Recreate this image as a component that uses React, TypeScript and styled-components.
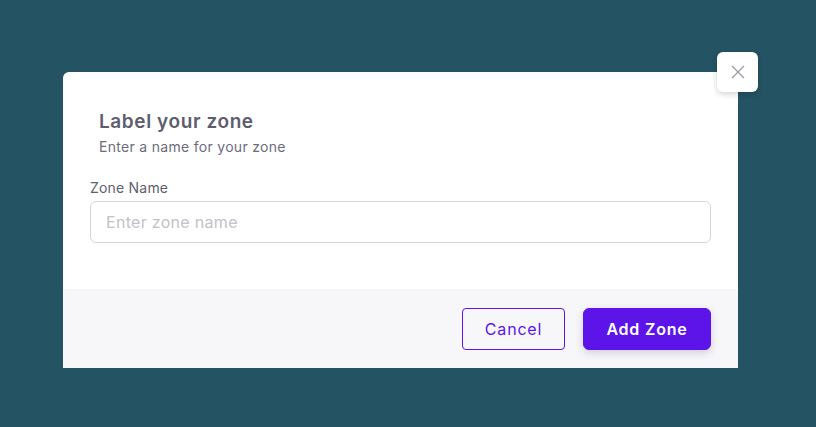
import React, { useState } from 'react';
import styled, { createGlobalStyle } from 'styled-components';

const GlobalStyle = createGlobalStyle`
  html, body {
    margin: 0;
    padding: 0;
    background: #245363;
    font-family: Inter, "Noto Sans", sans-serif;
  }
  * { box-sizing: border-box; }
`;

const Backdrop = styled.div`
  width: 816px;
  height: 427px;
  padding: 72px 0 0 63px;
  background: #245363;
`;

const Modal = styled.div`
  position: relative;
  width: 675px;
  background: #fff;
  border-radius: 6px 0 0 0;
`;

const CloseButton = styled.button`
  position: absolute;
  top: -20px;
  right: -20px;
  width: 41px;
  height: 40px;
  border: none;
  border-radius: 6px;
  background: #fff;
  box-shadow: 0 2px 6px rgba(0, 0, 0, 0.18);
  display: flex;
  align-items: center;
  justify-content: center;
  padding: 0;
  cursor: pointer;
`;

const Body = styled.div`
  padding: 38px 27px 46px 27px;
`;

const Header = styled.div`
  padding: 0 9px;
  margin-bottom: 23px;
`;

const Title = styled.h2`
  margin: 0;
  font-size: 19px;
  font-weight: 600;
  letter-spacing: 0.6px;
  color: #5d5d6c;
  line-height: 24px;
`;

const Subtitle = styled.p`
  margin: 4px 0 0;
  font-size: 14px;
  letter-spacing: 0.3px;
  color: #6c6c7c;
  line-height: 18px;
`;

const Label = styled.label`
  display: block;
  font-size: 14px;
  letter-spacing: 0.2px;
  color: #5e5e6e;
  line-height: 18px;
  margin-bottom: 4px;
`;

const Input = styled.input`
  width: 100%;
  height: 42px;
  border: 1px solid #d6d6d9;
  border-radius: 6px;
  padding: 0 15px;
  font-family: Inter, "Noto Sans", sans-serif;
  font-size: 16px;
  letter-spacing: 0.3px;
  color: #333;
  outline: none;
  &::placeholder { color: #c2c2c8; }
`;

const Footer = styled.div`
  background: #f7f7fa;
  height: 79px;
  padding: 0 27px;
  display: flex;
  align-items: center;
  justify-content: flex-end;
  gap: 18px;
`;

const Button = styled.button<{ $primary?: boolean }>`
  height: 42px;
  padding: 0;
  width: ${p => (p.$primary ? '128px' : '103px')};
  border-radius: ${p => (p.$primary ? '6px' : '4px')};
  border: 1px solid #5c14e9;
  background: ${p => (p.$primary ? '#5c14e9' : 'transparent')};
  color: ${p => (p.$primary ? '#fff' : '#5c14e9')};
  font-family: Inter, "Noto Sans", sans-serif;
  font-size: 16px;
  letter-spacing: 0.8px;
  font-weight: ${p => (p.$primary ? 600 : 400)};
  box-shadow: ${p => (p.$primary ? '0 3px 8px rgba(40, 20, 90, 0.18)' : 'none')};
  cursor: pointer;
`;

const App: React.FC = () => {
  const [name, setName] = useState('');

  return (
    <Backdrop>
      <GlobalStyle />
      <Modal>
        <CloseButton aria-label="Close">
          <svg width="14" height="14" viewBox="0 0 14 14" fill="none">
            <path d="M1 1L13 13M13 1L1 13" stroke="#9a9aa4" strokeWidth="1.2" />
          </svg>
        </CloseButton>
        <Body>
          <Header>
            <Title>Label your zone</Title>
            <Subtitle>Enter a name for your zone</Subtitle>
          </Header>
          <Label htmlFor="zone-name">Zone Name</Label>
          <Input
            id="zone-name"
            placeholder="Enter zone name"
            value={name}
            onChange={e => setName(e.target.value)}
          />
        </Body>
        <Footer>
          <Button>Cancel</Button>
          <Button $primary>Add Zone</Button>
        </Footer>
      </Modal>
    </Backdrop>
  );
};

export default App;
